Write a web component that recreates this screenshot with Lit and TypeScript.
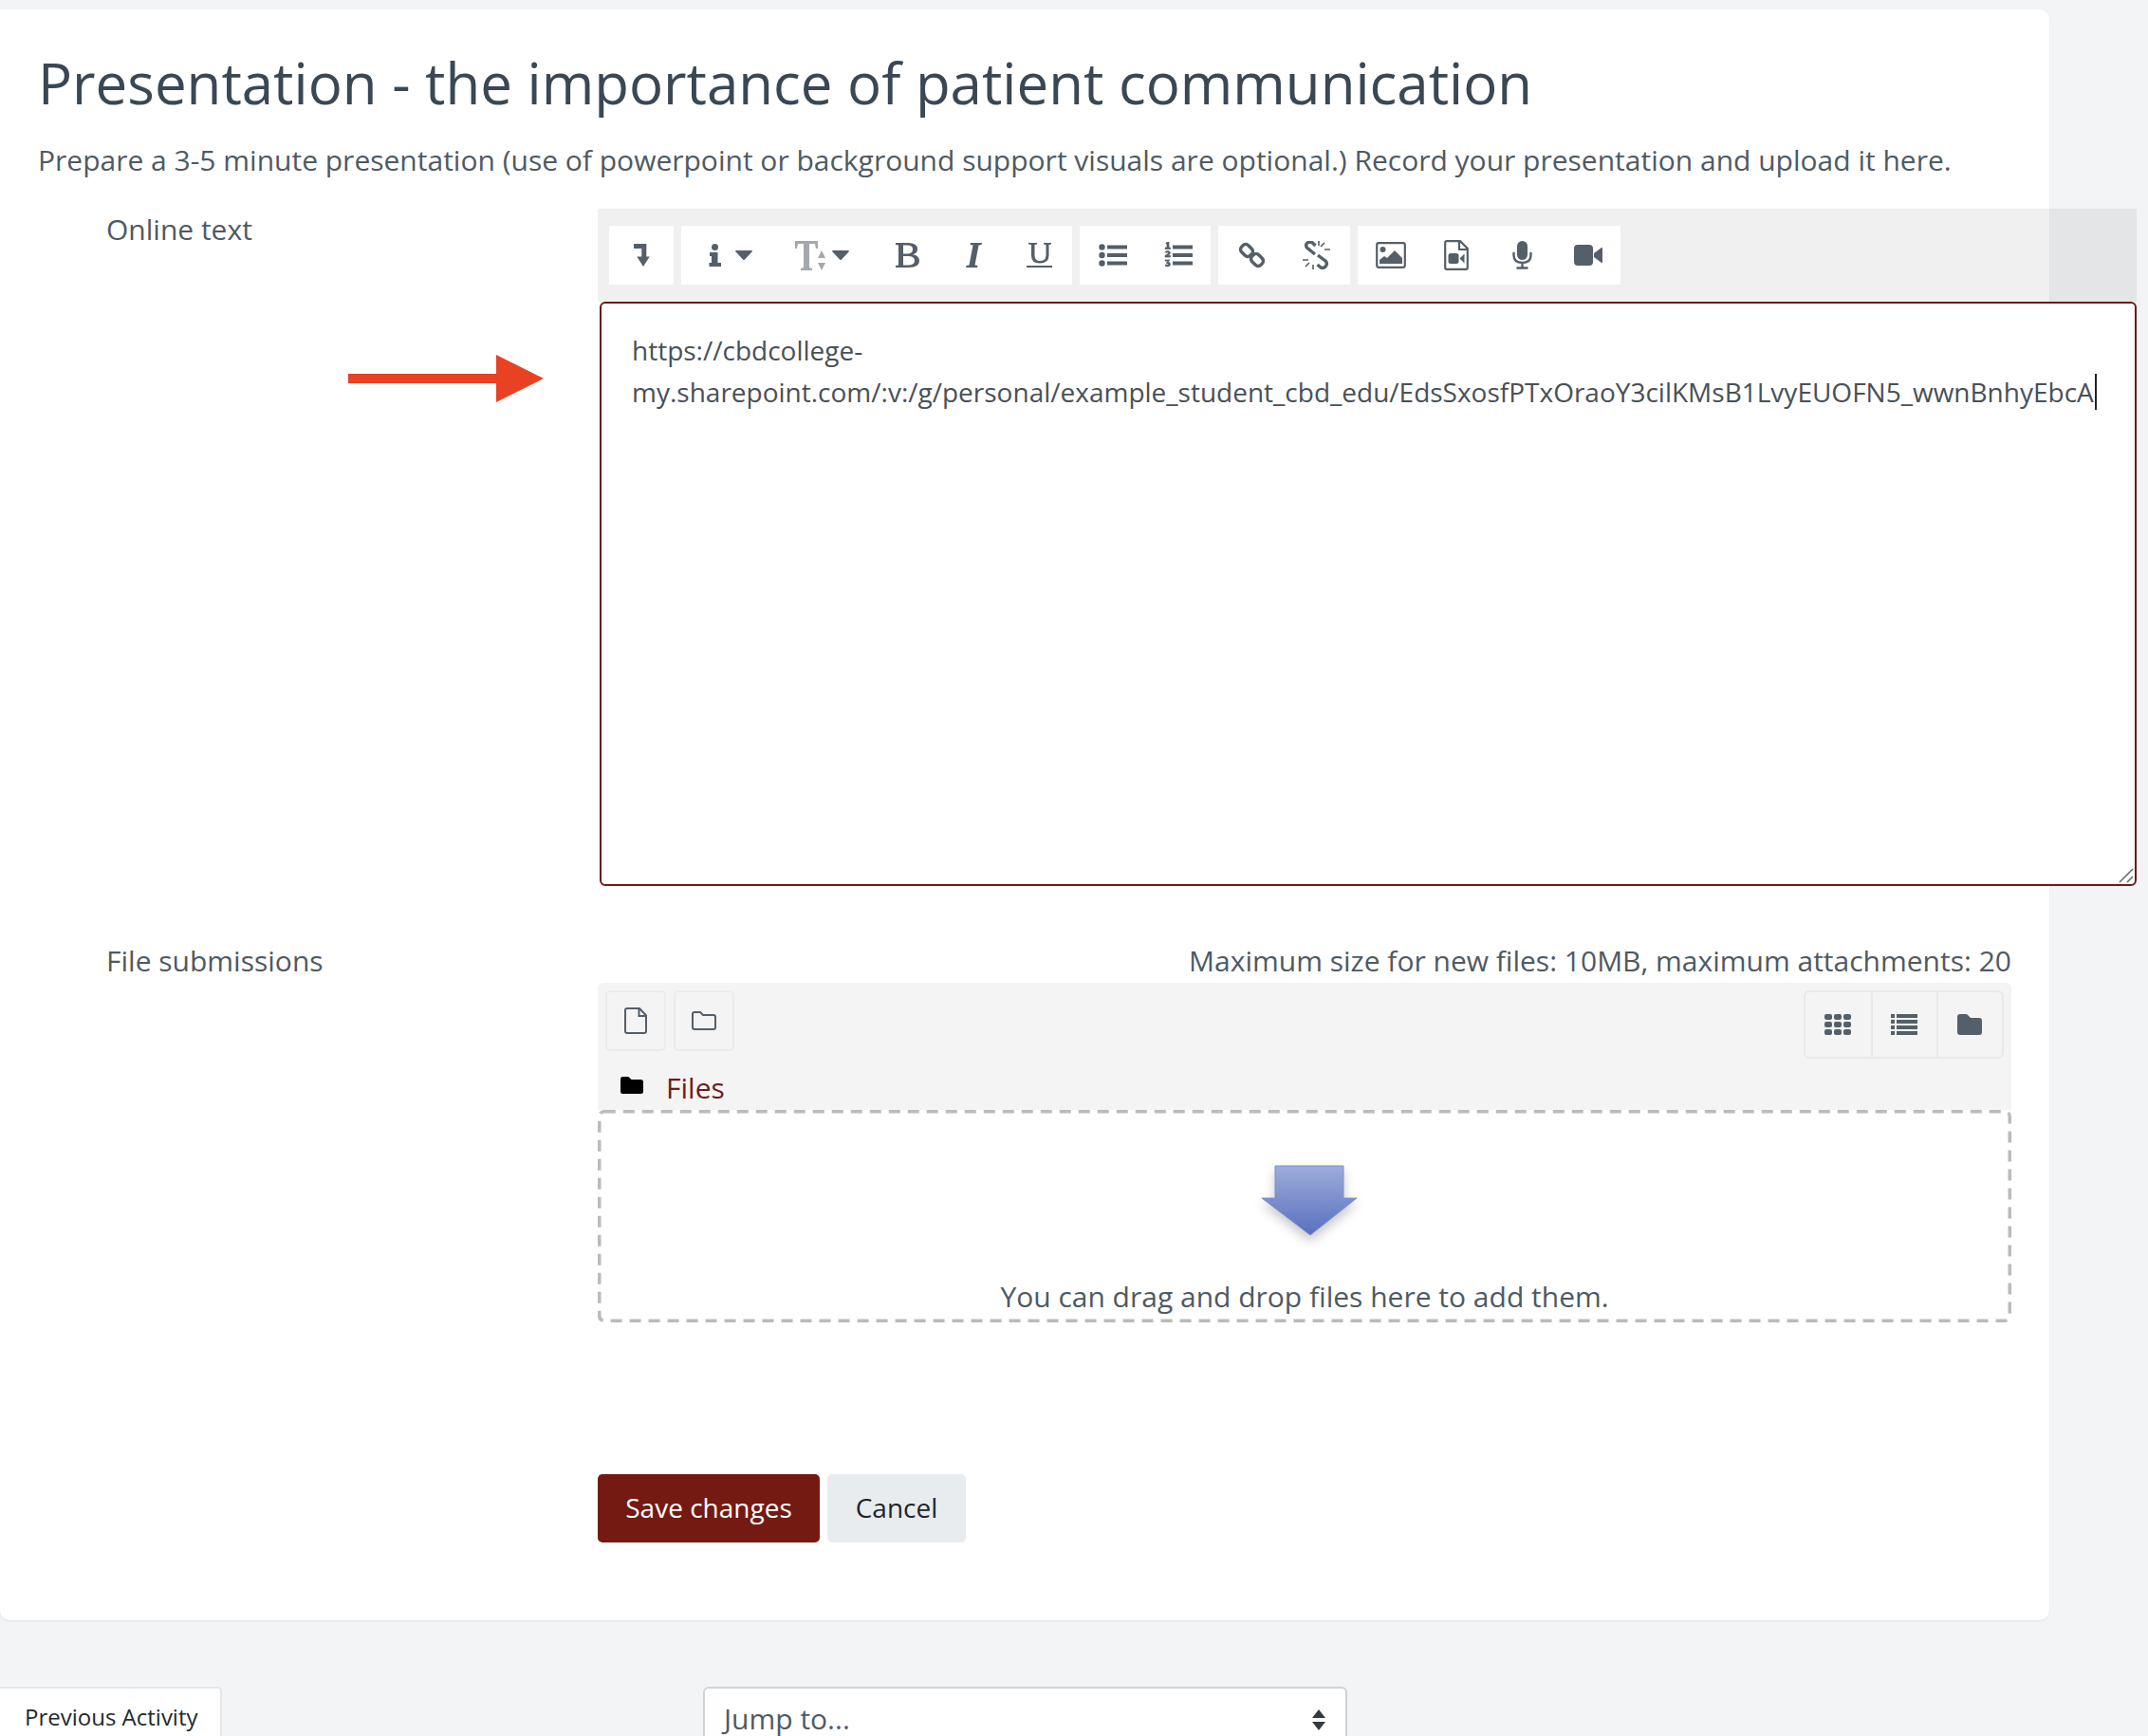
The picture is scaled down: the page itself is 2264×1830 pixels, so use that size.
import { LitElement, html, css, svg } from "lit";
import { customElement } from "lit/decorators.js";

const ic = (w: number, h: number, body: unknown, cls = "ic") =>
  html`<svg class=${cls} width=${w} height=${h} viewBox="0 0 ${w} ${h}">${body}</svg>`;

const caret = ic(18, 10, svg`<path d="M1 0h16q1.500 0 .5 1.500l-7.500 8q-1 1-2 0l-7.500-8Q-.5 0 1 0z"/>`);

@customElement("app-root")
export class AppRoot extends LitElement {
  static styles = css`
    :host { display: block; width: 2264px; height: 1830px; overflow: hidden; background: #f2f4f6; font-family: "Open Sans", "Noto Sans", sans-serif; color: #4f5963; font-size: 30px; padding-top: 10px; box-sizing: border-box; }
    .card { width: 2160px; height: 1698px; box-sizing: border-box; background: #fff; border-radius: 0 10px 10px 10px; padding: 0 40px; box-shadow: 0 1px 2px rgba(0,0,0,.08); }
    h1 { margin: 0; padding-top: 39px; font-size: 60px; line-height: 76px; font-weight: 400; color: #3a4754; white-space: nowrap; }
    .desc { margin: 22px 0 0; line-height: 44px; white-space: nowrap; }
    .row { display: grid; grid-template-columns: 590px 1490px; }
    .row.first { margin-top: 29px; }
    .row.files { margin-top: 57px; }
    .lbl { padding-left: 72px; line-height: 44px; position: relative; }
    .arrow { position: absolute; left: 327px; top: 154px; }
    .editor-wrap { width: 1622px; }
    .toolbar { background: rgba(0,0,0,.06); height: 98px; box-sizing: border-box; padding: 18px 12px 0; display: flex; gap: 8px; }
    .grp { background: #fff; height: 62px; display: flex; align-items: center; }
    .btn { display: flex; align-items: center; justify-content: center; height: 62px; }
    .ic { fill: #555f69; display: block; }
    .g1 { width: 68px; }
    .w69 { width: 69.300px; }
    .info { width: 93px; gap: 15px; justify-content: flex-start; padding-left: 29px; box-sizing: border-box; }
    .fsize { width: 111px; gap: 7px; }
    .editor { margin-left: 2px; height: 616px; box-sizing: border-box; border: 2px solid #6a1b17; border-radius: 6px; background: #fff; padding: 27px 24px 13px 32px; line-height: 44px; font-size: 28px; position: relative; color: #495057; }
    .cur { border-right: 2px solid #222; padding-right: 1px; }
    .grip { position: absolute; right: 0; bottom: 0; }
    .maxline { text-align: right; line-height: 44px; }
    .fm { background: #f4f4f5; height: 134px; border-radius: 6px 6px 0 0; padding: 8px 8px 0; box-sizing: border-box; margin-top: 1px; }
    .fmtop { display: flex; justify-content: space-between; align-items: flex-start; }
    .fl { display: flex; gap: 8px; }
    .fb { width: 64px; height: 64px; box-sizing: border-box; border: 2px solid #e9ecef; border-radius: 5px; display: flex; align-items: center; justify-content: center; }
    .fr { display: flex; border: 2px solid #e6eaec; border-radius: 6px; height: 72px; box-sizing: border-box; }
    .fr div { width: 69px; display: flex; align-items: center; justify-content: center; padding-right: 2px; box-sizing: border-box; }
    .fr div + div { border-left: 2px solid #e6eaec; }
    .crumb { display: flex; align-items: center; gap: 24px; margin: 11px 0 0 16px; line-height: 40px; color: #6b1d1d; }
    .blk { fill: #000; display: block; margin-top: -6px; }
    .drop { height: 224px; position: relative; display: flex; flex-direction: column; align-items: center; }
    .dash { position: absolute; left: 0; top: 0; }
    .dash rect { fill: none; stroke: #bbb; stroke-width: 3.500; stroke-dasharray: 12 8; }
    .down { margin: 58px 0 0 10px; filter: drop-shadow(0 6px 6px rgba(0,0,0,.22)); }
    .droptext { margin-top: 42px; line-height: 44px; }
    .actions { margin: 160px 0 0 590px; display: flex; gap: 8px; font-size: 28px; }
    .bt { height: 72px; line-height: 70px; border-radius: 5px; text-align: center; box-sizing: border-box; }
    .save { width: 234px; background: #741a12; color: #fff; }
    .cancel { width: 146px; background: #e9ecef; color: #212529; }
    .nav { display: flex; margin-top: 70px; }
    .prev { width: 234px; height: 70px; box-sizing: border-box; background: #fff; border: 2px solid #e4e6e9; border-left: 0; border-radius: 0 5px 0 0; font-size: 24px; line-height: 60px; padding-left: 26px; color: #24292e; white-space: nowrap; }
    .jump { margin-left: 507px; width: 679px; height: 70px; box-sizing: border-box; background: #fff; border: 2px solid #ced4da; border-bottom: 0; border-radius: 6px 6px 0 0; padding: 0 20px; display: flex; justify-content: space-between; line-height: 64px; }
    .updown { margin-top: 22px; fill: #343a40; display: block; }
  `;

  render() {
    return html`
      <div class="card">
        <h1>Presentation - the importance of patient communication</h1>
        <p class="desc">Prepare a 3-5 minute presentation (use of powerpoint or background support visuals are optional.) Record your presentation and upload it here.</p>
        <div class="row first">
          <div class="lbl">Online text
            <svg class="arrow" width="206" height="50" viewBox="0 0 206 50"><path fill="#e84123" d="M0 20h156V0l50 25-50 25V30H0z"/></svg>
          </div>
          <div class="editor-wrap">
            <div class="toolbar">
              <div class="grp g1"><div class="btn g1">${ic(17, 24, svg`<path d="M0 0h13.300v13.500h3.400L10 24 3.300 13.500h5V5H0z"/>`)}</div></div>
              <div class="grp">
                <div class="btn info">${ic(13, 24, svg`<circle cx="6.500" cy="3.500" r="3.500"/><path d="M1 9h8.500v11H13v4H.5v-4H3v-7H1z"/>`)}${caret}</div>
                <div class="btn fsize">${ic(32, 31, svg`<path style="fill:#a5a8ac" d="M0 0h24v8h-2l-1-5h-6v25l3 1v2H6v-2l3-1V3H3L2 8H0z"/><path style="fill:#a5a8ac" d="M24 18l4-8 4 8zM24 23h8l-4 8z"/>`)}${caret}</div>
                <div class="btn w69">${ic(25, 26, svg`<path d="M0 0h13q10 0 10 6.500 0 4.500-5 5.800 7 1 7 6.700 0 7-11 7H0v-2l3-.5V2.500L0 2zM8 2.500v9h4q6 0 6-4.800Q18 2.500 12 2.500zM8 14v9.500h5q7 0 7-4.800 0-4.700-7-4.700z"/>`)}</div>
                <div class="btn w69">${ic(18, 26, svg`<path d="M6 0h12l-.5 2-3 .5-4 21 3 .5-.5 2H1l.5-2 3-.5 4-21-3-.5z"/>`)}</div>
                <div class="btn w69">${ic(27, 26, svg`<path d="M2 0h9v1.500l-2.500.5v11q0 6 5.500 6 6.500 0 6.500-6V2L18 1.500V0h8v1.500L23.500 2v11q0 8.500-9.500 8.500-9 0-9-8V2l-3-.5zM0 24h27v2H0z"/>`)}</div>
              </div>
              <div class="grp">
                <div class="btn w69">${ic(30, 24, svg`<circle cx="3.500" cy="3.500" r="3.200"/><circle cx="3.500" cy="12" r="3.200"/><circle cx="3.500" cy="20.500" r="3.200"/><rect x="9" y="1.500" width="21" height="4"/><rect x="9" y="10" width="21" height="4"/><rect x="9" y="18.500" width="21" height="4"/>`)}</div>
                <div class="btn w69">${ic(30, 28, svg`<path style="stroke:#555f69;stroke-width:.7" d="M2 1l2-1h1v6h1.500v1.500H1V6h2V2H2zM1 10.500q1-1 3-1t2.500 2q0 1.500-2.500 3H6.500V16H1v-1.500q3.500-2 3.500-3 0-.6-.8-.6t-1.700.6zM1 19h5l-2 2q2.500.3 2.500 2.500T3.500 26Q2 26 1 25l.8-1.200q1 .7 1.700.7t.9-.8-1.700-.9v-1.200l1.500-1.500H1z"/><rect x="9" y="3.500" width="21" height="4"/><rect x="9" y="12" width="21" height="4"/><rect x="9" y="20.500" width="21" height="4"/>`)}</div>
              </div>
              <div class="grp">
                <div class="btn w69">${ic(29, 30, svg`<g style="fill:none;stroke:#555f69;stroke-width:3.400"><rect x="2.500" y="5" width="13" height="10" rx="4" transform="rotate(45 9 10)"/><rect x="13.500" y="15" width="13" height="10" rx="4" transform="rotate(45 20 20)"/></g>`)}</div>
                <div class="btn w69">${ic(30, 30, svg`<g style="fill:none;stroke:#555f69;stroke-width:3.400"><path d="M13 14 4.500 7q-2-3 .5-5t5.500 0l3 3"/><path d="M15.500 25l3 2.500q3 2 5.500-.5t.5-5.500L16 15"/></g><g style="fill:none;stroke:#555f69;stroke-width:1.600"><path d="M17 0v5M23 2l-4 4M29 9h-6M0 20h6M3 27l4-4M11 30v-5"/></g>`)}</div>
              </div>
              <div class="grp">
                <div class="btn w69">${ic(32, 28, svg`<rect x="1.200" y="1.200" width="29.600" height="25.600" rx="2" style="fill:none;stroke:#555f69;stroke-width:2.200"/><circle cx="7.500" cy="8" r="3"/><path d="M4 23v-4l5-4 3 2 8-8 8 8v6z"/>`)}</div>
                <div class="btn w69">${ic(26, 32, svg`<path d="M1.200 3q0-1.800 1.800-1.800h14L24.800 9v20q0 1.800-1.800 1.800H3Q1.200 30.800 1.200 29zM16 1.500V10h8.500" style="fill:none;stroke:#555f69;stroke-width:2.200"/><rect x="4.500" y="14" width="11" height="11" rx="2.500"/><path d="M16.500 19.500l5-5v10z"/>`)}</div>
                <div class="btn w69">${ic(21, 30, svg`<rect x="5" y="0" width="11" height="20" rx="5.500"/><path d="M1.500 12v3q0 8 9 8t9-8v-3M10.500 23v5M4.500 28.500h12" style="fill:none;stroke:#555f69;stroke-width:2.400"/>`)}</div>
                <div class="btn w69">${ic(30, 22, svg`<rect x="0" y="0" width="20" height="22" rx="4"/><path d="M21 9l8-6q1-.5 1 1v14q0 1.500-1 1l-8-6z"/>`)}</div>
              </div>
            </div>
            <div class="editor">
              https://cbdcollege-my.sharepoint.com/:v:/g/personal/example_student_cbd_edu/EdsSxosfPTxOraoY3cilKMsB1LvyEUOFN5_wwnBnhyEbcA<span class="cur"></span>
              <svg class="grip" width="18" height="18" viewBox="0 0 18 18"><path d="M2 16 16 2M10 16l6-6" stroke="#666" stroke-width="1.500" fill="none"/></svg>
            </div>
          </div>
        </div>
        <div class="row files">
          <div class="lbl">File submissions</div>
          <div>
            <div class="maxline">Maximum size for new files: 10MB, maximum attachments: 20</div>
            <div class="fm">
              <div class="fmtop">
                <div class="fl">
                  <div class="fb">${ic(24, 28, svg`<path d="M1 3q0-2 2-2h13l7 7.500V25q0 2-2 2H3q-2 0-2-2zM15.500 1.500V9H23" style="fill:none;stroke:#555f69;stroke-width:2"/>`)}</div>
                  <div class="fb">${ic(26, 20, svg`<path d="M1 3q0-2 2-2h6l3 3h11q2 0 2 2v11q0 2-2 2H3q-2 0-2-2z" style="fill:none;stroke:#555f69;stroke-width:2"/>`)}</div>
                </div>
                <div class="fr">
                  <div>${ic(28, 22, svg`<rect x="0" y="0" width="8" height="6" rx="2"/><rect x="10" y="0" width="8" height="6" rx="2"/><rect x="20" y="0" width="8" height="6" rx="2"/><rect x="0" y="8" width="8" height="6" rx="2"/><rect x="10" y="8" width="8" height="6" rx="2"/><rect x="20" y="8" width="8" height="6" rx="2"/><rect x="0" y="16" width="8" height="6" rx="2"/><rect x="10" y="16" width="8" height="6" rx="2"/><rect x="20" y="16" width="8" height="6" rx="2"/>`)}</div>
                  <div>${ic(28, 22, svg`<path d="M0 0h4v4H0zM6 0h22v4H6zM0 6h4v4H0zM6 6h22v4H6zM0 12h4v4H0zM6 12h22v4H6zM0 18h4v4H0zM6 18h22v4H6z"/>`)}</div>
                  <div>${ic(26, 22, svg`<path d="M0 3q0-3 3-3h6q2 0 3 2l2 2h9q3 0 3 3v12q0 3-3 3H3q-3 0-3-3z"/>`)}</div>
                </div>
              </div>
              <div class="crumb">${ic(24, 18, svg`<path d="M0 2.500q0-2.500 2.500-2.500h5q1.500 0 2.500 1.500L11.500 3h10q2.500 0 2.500 2.500v10q0 2.500-2.500 2.500h-19Q0 18 0 15.500z"/>`, "blk")}<span>Files</span></div>
            </div>
            <div class="drop">
              <svg class="dash" width="1490" height="224" viewBox="0 0 1490 224"><rect x="1.750" y="1.750" width="1486.500" height="220.500" rx="5"/></svg>
              <svg class="down" width="100" height="75" viewBox="0 0 100 75">
                <defs><linearGradient id="dg" x1="0" y1="0" x2="0" y2="1"><stop offset="0" stop-color="#9dacdb"/><stop offset="1" stop-color="#5870bf"/></linearGradient></defs>
                <path fill="url(#dg)" stroke="#7d90cf" stroke-width="1" d="M14 1h72v34h14L51 74 0 35h14z"/>
              </svg>
              <div class="droptext">You can drag and drop files here to add them.</div>
            </div>
          </div>
        </div>
        <div class="actions"><div class="bt save">Save changes</div><div class="bt cancel">Cancel</div></div>
      </div>
      <div class="nav">
        <div class="prev">Previous Activity</div>
        <div class="jump"><span>Jump to...</span>
          <svg class="updown" width="16" height="22" viewBox="0 0 16 22"><path d="M8 0l7 9H1zM8 22l-7-9h14z"/></svg>
        </div>
      </div>
    `;
  }
}
